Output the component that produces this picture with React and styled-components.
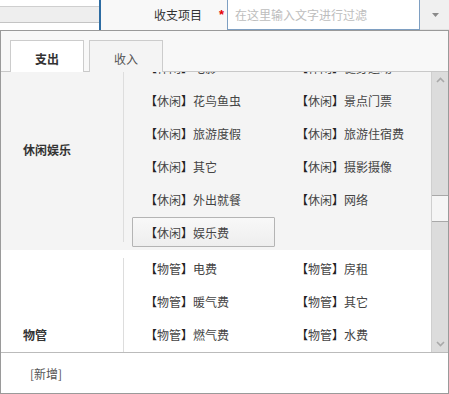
import React, { useState } from "react";
import styled, { createGlobalStyle } from "styled-components";

const GlobalStyle = createGlobalStyle`
  html, body {
    margin: 0;
    padding: 0;
    background: #ffffff;
  }
  body {
    font-family: "Noto Sans CJK SC", "Liberation Sans", sans-serif;
    font-size: 12px;
    color: #333;
  }
`;

const groups = [
  {
    name: "休闲娱乐",
    prefix: "休闲",
    items: [
      "电影",
      "健身运动",
      "花鸟鱼虫",
      "景点门票",
      "旅游度假",
      "旅游住宿费",
      "其它",
      "摄影摄像",
      "外出就餐",
      "网络",
      "娱乐费",
    ],
  },
  {
    name: "物管",
    prefix: "物管",
    items: [
      "电费",
      "房租",
      "暖气费",
      "其它",
      "燃气费",
      "水费",
      "物业费",
      "停车费",
      "维修费",
      "有线电视",
    ],
  },
];

const Page = styled.div`
  width: 449px;
  height: 394px;
  display: flex;
  flex-direction: column;
  overflow: hidden;
`;

const FormRow = styled.div`
  display: flex;
  height: 30px;
  flex-shrink: 0;
`;

const LeftStrip = styled.div`
  width: 99px;
  padding-top: 6px;
  background: #fff;
`;

const GreyBar = styled.div`
  height: 15px;
  background: #eeeeee;
  border-top: 1px solid #cfcfcf;
  border-bottom: 1px solid #c4c4c4;
`;

const BlueEdge = styled.div`
  width: 2px;
  background: #2d6ca2;
`;

const FieldArea = styled.div`
  flex: 1;
  display: flex;
  align-items: stretch;
  background: #f8f8f8;
`;

const FieldLabel = styled.label`
  width: 118px;
  text-align: right;
  line-height: 30px;
  color: #333;
  padding-right: 17px;
  box-sizing: border-box;
`;

const Required = styled.span`
  width: 8px;
  color: #e60000;
  font-weight: bold;
  line-height: 30px;
  font-family: "Liberation Sans", sans-serif;
  font-size: 13px;
`;

const FilterInput = styled.input`
  width: 193px;
  height: 30px;
  box-sizing: border-box;
  border: 1px solid #7e9fc2;
  border-top: none;
  padding: 0 7px;
  font: inherit;
  font-size: 12px;
  color: #333;
  outline: none;
  background: #fff;
  &::placeholder {
    color: #bdbdbd;
  }
`;

const DropButton = styled.div`
  flex: 1;
  display: flex;
  align-items: center;
  justify-content: center;
  background: #f0f0f0;
  border-bottom: 1px solid #e2e2e2;
  padding-left: 1px;
`;

const Panel = styled.div`
  flex: 1;
  display: flex;
  flex-direction: column;
  border: 1px solid #9a9a9a;
  background: #f8f8f8;
  min-height: 0;
`;

const TabBar = styled.div`
  display: flex;
  gap: 5px;
  padding: 9px 0 0 9px;
  height: 31px;
  border-bottom: 1px solid #c8c8c8;
  flex-shrink: 0;
`;

const Tab = styled.div`
  width: 72px;
  height: ${(p) => (p.$active ? "31px" : "30px")};
  margin-bottom: ${(p) => (p.$active ? "-1px" : "0")};
  border: 1px solid #cccccc;
  border-bottom: ${(p) => (p.$active ? "none" : "1px solid #cccccc")};
  background: ${(p) => (p.$active ? "#ffffff" : "#f4f4f4")};
  color: ${(p) => (p.$active ? "#333" : "#555")};
  font-weight: ${(p) => (p.$active ? "bold" : "normal")};
  display: flex;
  align-items: center;
  justify-content: center;
  padding-top: 2px;
  box-sizing: content-box;
  font-size: 12px;
  cursor: pointer;
`;

const Body = styled.div`
  display: flex;
  height: 280px;
  flex-shrink: 0;
  background: #fff;
`;

const Viewport = styled.div`
  flex: 1;
  overflow: hidden;
`;

const List = styled.div`
  margin-top: ${(p) => -p.$offset}px;
`;

const Group = styled.div`
  display: flex;
  background: ${(p) => (p.$active ? "#f4f4f4" : "#ffffff")};
`;

const GroupName = styled.div`
  width: 122px;
  box-sizing: border-box;
  padding-left: 22px;
  display: flex;
  align-items: center;
  font-weight: bold;
  color: #333;
`;

const Divider = styled.div`
  width: 1px;
  margin: 8px 0;
  background: #dddddd;
`;

const Items = styled.div`
  flex: 1;
  display: grid;
  grid-template-columns: 143px 143px;
  column-gap: 8px;
  row-gap: 3px;
  padding: 3px 0 3px 8px;
  align-content: start;
`;

const Item = styled.div`
  height: 30px;
  box-sizing: border-box;
  padding: 0 12px;
  line-height: 29px;
  white-space: nowrap;
  color: #444;
  border: 1px solid ${(p) => (p.$selected ? "#b4b4b4" : "transparent")};
  border-radius: 1px;
  background: ${(p) =>
    p.$selected ? "linear-gradient(#f8f8f8, #eeeeee)" : "transparent"};
  cursor: pointer;
`;

const Bracket = styled.span`
  color: #222;
`;

const ScrollTrack = styled.div`
  width: 16px;
  background: #dcdcdc;
  border-left: 1px solid #cfcfcf;
  display: flex;
  flex-direction: column;
  align-items: center;
`;

const ArrowBox = styled.div`
  height: 16px;
  width: 100%;
  display: flex;
  align-items: center;
  justify-content: center;
`;

const TrackSpace = styled.div`
  flex: ${(p) => p.$grow};
  width: 100%;
`;

const Thumb = styled.div`
  height: 25px;
  width: 100%;
  box-sizing: content-box;
  background: #f5f5f5;
  border-top: 1px solid #a8a8a8;
  border-bottom: 1px solid #a8a8a8;
`;

const Footer = styled.div`
  flex: 1;
  border-top: 1px solid #bbbbbb;
  background: #fff;
  display: flex;
  align-items: center;
  padding-left: 29px;
`;

const AddLink = styled.a`
  color: #555;
  text-decoration: none;
  cursor: pointer;
`;

function Chevron({ up }) {
  return (
    <svg width="9" height="6" viewBox="0 0 9 6">
      <path
        d={up ? "M1 5 L4.5 1.5 L8 5" : "M1 1 L4.5 4.5 L8 1"}
        fill="none"
        stroke="#a9a9a9"
        strokeWidth="1.6"
      />
    </svg>
  );
}

export default function App() {
  const [tab, setTab] = useState("out");
  const [selected, setSelected] = useState("休闲-娱乐费");

  return (
    <>
      <GlobalStyle />
      <Page>
        <FormRow>
          <LeftStrip>
            <GreyBar />
          </LeftStrip>
          <BlueEdge />
          <FieldArea>
            <FieldLabel>收支项目</FieldLabel>
            <Required>*</Required>
            <FilterInput placeholder="在这里输入文字进行过滤" />
            <DropButton>
              <svg width="7" height="4" viewBox="0 0 7 4">
                <path d="M0 0 H7 L3.5 4 Z" fill="#8a8a8a" />
              </svg>
            </DropButton>
          </FieldArea>
        </FormRow>

        <Panel>
          <TabBar>
            <Tab $active={tab === "out"} onClick={() => setTab("out")}>
              支出
            </Tab>
            <Tab $active={tab === "in"} onClick={() => setTab("in")}>
              收入
            </Tab>
          </TabBar>

          <Body>
            <Viewport>
              <List $offset={23}>
                {groups.map((g, gi) => (
                  <Group key={g.name} $active={gi === 0}>
                    <GroupName>{g.name}</GroupName>
                    <Divider />
                    <Items>
                      {g.items.map((it) => {
                        const key = g.prefix + "-" + it;
                        return (
                          <Item
                            key={key}
                            $selected={selected === key}
                            onClick={() => setSelected(key)}
                          >
                            <Bracket>【</Bracket>
                            {g.prefix}
                            <Bracket>】</Bracket>
                            {it}
                          </Item>
                        );
                      })}
                    </Items>
                  </Group>
                ))}
              </List>
            </Viewport>
            <ScrollTrack>
              <ArrowBox>
                <Chevron up />
              </ArrowBox>
              <TrackSpace $grow={107} />
              <Thumb />
              <TrackSpace $grow={114} />
              <ArrowBox>
                <Chevron />
              </ArrowBox>
            </ScrollTrack>
          </Body>

          <Footer>
            <AddLink>[新增]</AddLink>
          </Footer>
        </Panel>
      </Page>
    </>
  );
}
